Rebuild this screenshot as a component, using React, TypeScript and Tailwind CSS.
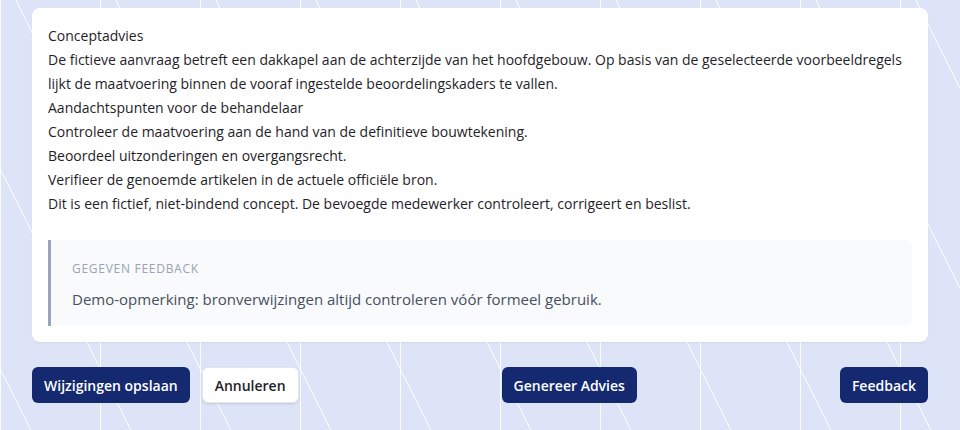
import React from "react";

const lines = [
  "Conceptadvies",
  "De fictieve aanvraag betreft een dakkapel aan de achterzijde van het hoofdgebouw. Op basis van de geselecteerde voorbeeldregels lijkt de maatvoering binnen de vooraf ingestelde beoordelingskaders te vallen.",
  "Aandachtspunten voor de behandelaar",
  "Controleer de maatvoering aan de hand van de definitieve bouwtekening.",
  "Beoordeel uitzonderingen en overgangsrecht.",
  "Verifieer de genoemde artikelen in de actuele officiële bron.",
  "Dit is een fictief, niet-bindend concept. De bevoegde medewerker controleert, corrigeert en beslist.",
];

export default function App() {
  return (
    <div
      className="min-h-screen bg-[#dee4f7] bg-[image:linear-gradient(90deg,rgba(255,255,255,0.85)_1px,transparent_1px),repeating-linear-gradient(63.43deg,transparent_0_27px,rgba(255,255,255,0.65)_27px_28.2px,transparent_28.2px_89.44px)] bg-[size:100px_100%,auto] px-8 pt-2 pb-6 font-['Open_Sans',sans-serif]"
    >
      {/* Advice card */}
      <div className="rounded-lg bg-white p-4 shadow-[0_1px_2px_rgba(30,41,90,0.06)]">
        <div className="text-[14px] leading-6 text-[#1f2328]">
          {lines.map((l, i) => (
            <p key={i}>{l}</p>
          ))}
        </div>

        {/* Given feedback */}
        <div className="mt-6 rounded-r-md border-l-[3px] border-[#9aa5bd] bg-[#f8fafc] pl-[21px] pr-5 pt-[21px] pb-[15px]">
          <p className="text-[12px] leading-4 uppercase tracking-[0.06em] font-medium text-[#9aa3b2]">
            Gegeven feedback
          </p>
          <p className="mt-2.5 text-[15px] leading-6 text-[#475060]">
            Demo-opmerking: bronverwijzingen altijd controleren vóór formeel gebruik.
          </p>
        </div>
      </div>

      {/* Actions */}
      <div className="mt-[25px] flex items-center justify-between">
        <div className="flex items-center gap-3">
          <button className="h-9 rounded-md bg-[#14296f] px-3 text-[14px] font-semibold text-white">
            Wijzigingen opslaan
          </button>
          <button className="h-9 rounded-md border border-[#e3e7f0] bg-white px-3 text-[14px] font-semibold text-[#1f2328] shadow-sm">
            Annuleren
          </button>
        </div>
        <button className="h-9 rounded-md bg-[#14296f] px-3 text-[14px] font-semibold text-white">
          Genereer Advies
        </button>
        <button className="h-9 rounded-md bg-[#14296f] px-3 text-[14px] font-semibold text-white">
          Feedback
        </button>
      </div>
    </div>
  );
}
